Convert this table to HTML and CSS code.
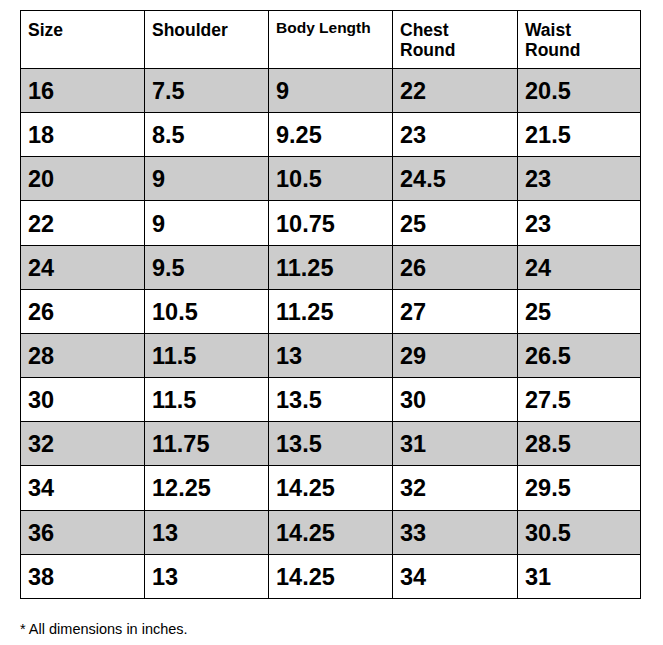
FILE: index.html
```html
<!DOCTYPE html>
<html>
<head>
<meta charset="utf-8">
<link rel="stylesheet" href="styles.css">
</head>
<body>
<table class="size-table">
  <colgroup>
    <col class="c1"><col class="c2"><col class="c3"><col class="c4"><col class="c5">
  </colgroup>
  <thead>
    <tr class="head">
      <th>Size</th>
      <th>Shoulder</th>
      <th class="small">Body Length</th>
      <th>Chest<br>Round</th>
      <th>Waist<br>Round</th>
    </tr>
  </thead>
  <tbody>
    <tr class="alt"><td>16</td><td>7.5</td><td>9</td><td>22</td><td>20.5</td></tr>
    <tr><td>18</td><td>8.5</td><td>9.25</td><td>23</td><td>21.5</td></tr>
    <tr class="alt"><td>20</td><td>9</td><td>10.5</td><td>24.5</td><td>23</td></tr>
    <tr><td>22</td><td>9</td><td>10.75</td><td>25</td><td>23</td></tr>
    <tr class="alt"><td>24</td><td>9.5</td><td>11.25</td><td>26</td><td>24</td></tr>
    <tr><td>26</td><td>10.5</td><td>11.25</td><td>27</td><td>25</td></tr>
    <tr class="alt"><td>28</td><td>11.5</td><td>13</td><td>29</td><td>26.5</td></tr>
    <tr><td>30</td><td>11.5</td><td>13.5</td><td>30</td><td>27.5</td></tr>
    <tr class="alt"><td>32</td><td>11.75</td><td>13.5</td><td>31</td><td>28.5</td></tr>
    <tr><td>34</td><td>12.25</td><td>14.25</td><td>32</td><td>29.5</td></tr>
    <tr class="alt"><td>36</td><td>13</td><td>14.25</td><td>33</td><td>30.5</td></tr>
    <tr><td>38</td><td>13</td><td>14.25</td><td>34</td><td>31</td></tr>
  </tbody>
</table>
<p class="note">* All dimensions in inches.</p>
</body>
</html>
```

FILE: styles.css
```css
html, body {
  margin: 0;
  padding: 0;
  background: #ffffff;
}
body {
  padding: 10px 20px;
  font-family: "Liberation Sans", Arial, sans-serif;
  color: #000000;
}
.size-table {
  border-collapse: collapse;
  table-layout: fixed;
  width: 620px;
}
.c1 { width: 124px; }
.c2 { width: 124px; }
.c3 { width: 124px; }
.c4 { width: 125px; }
.c5 { width: 123px; }
.size-table th,
.size-table td {
  border: 1px solid #000000;
  text-align: left;
  padding: 0 7px;
}
.head th {
  height: 58px;
  vertical-align: top;
  padding-top: 9px;
  padding-bottom: 0;
  box-sizing: border-box;
  font-size: 17.5px;
  line-height: 20px;
  font-weight: bold;
}
.head th.small {
  font-size: 15.5px;
  padding-top: 7px;
}
.size-table td {
  height: 44.17px;
  box-sizing: border-box;
  vertical-align: middle;
  font-size: 23.5px;
  font-weight: bold;
  line-height: 26px;
  padding-top: 1px;
}
.alt td {
  background: #cccccc;
}
.note {
  margin: 21px 0 0 0;
  font-size: 14.5px;
  line-height: 18px;
}
```
